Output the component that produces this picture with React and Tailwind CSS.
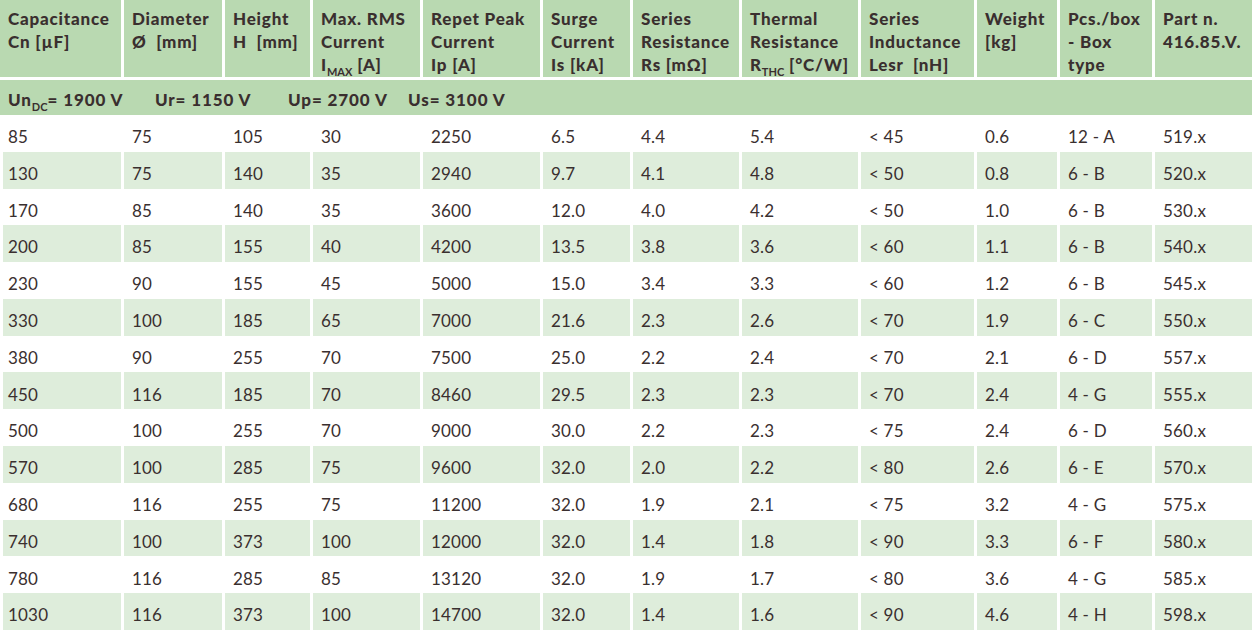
import React from "react";

const COLS =
  "grid grid-cols-[121px_98px_85px_107px_117px_87px_106px_116px_113px_80px_92px_97px] gap-x-[3px]";

const Sub = ({ children }) => (
  <span className="text-[11px] relative top-[5px] tracking-normal font-bold">{children}</span>
);

const headers = [
  <>Capacitance<br />Cn [µF]</>,
  <>Diameter<br />Ø&nbsp; [mm]</>,
  <>Height<br />H&nbsp; [mm]</>,
  <>Max. RMS<br />Current<br />I<Sub>MAX</Sub> [A]</>,
  <>Repet Peak<br />Current<br />Ip [A]</>,
  <>Surge<br />Current<br />Is [kA]</>,
  <>Series<br />Resistance<br />Rs [mΩ]</>,
  <>Thermal<br />Resistance<br />R<Sub>THC</Sub> [°C/W]</>,
  <>Series<br />Inductance<br />Lesr&nbsp; [nH]</>,
  <>Weight<br />[kg]</>,
  <>Pcs./box<br />- Box<br />type</>,
  <>Part n.<br />416.85.V.</>,
];

const rows = [
  ["85", "75", "105", "30", "2250", "6.5", "4.4", "5.4", "< 45", "0.6", "12 - A", "519.x"],
  ["130", "75", "140", "35", "2940", "9.7", "4.1", "4.8", "< 50", "0.8", "6 - B", "520.x"],
  ["170", "85", "140", "35", "3600", "12.0", "4.0", "4.2", "< 50", "1.0", "6 - B", "530.x"],
  ["200", "85", "155", "40", "4200", "13.5", "3.8", "3.6", "< 60", "1.1", "6 - B", "540.x"],
  ["230", "90", "155", "45", "5000", "15.0", "3.4", "3.3", "< 60", "1.2", "6 - B", "545.x"],
  ["330", "100", "185", "65", "7000", "21.6", "2.3", "2.6", "< 70", "1.9", "6 - C", "550.x"],
  ["380", "90", "255", "70", "7500", "25.0", "2.2", "2.4", "< 70", "2.1", "6 - D", "557.x"],
  ["450", "116", "185", "70", "8460", "29.5", "2.3", "2.3", "< 70", "2.4", "4 - G", "555.x"],
  ["500", "100", "255", "70", "9000", "30.0", "2.2", "2.3", "< 75", "2.4", "6 - D", "560.x"],
  ["570", "100", "285", "75", "9600", "32.0", "2.0", "2.2", "< 80", "2.6", "6 - E", "570.x"],
  ["680", "116", "255", "75", "11200", "32.0", "1.9", "2.1", "< 75", "3.2", "4 - G", "575.x"],
  ["740", "100", "373", "100", "12000", "32.0", "1.4", "1.8", "< 90", "3.3", "6 - F", "580.x"],
  ["780", "116", "285", "85", "13120", "32.0", "1.9", "1.7", "< 80", "3.6", "4 - G", "585.x"],
  ["1030", "116", "373", "100", "14700", "32.0", "1.4", "1.6", "< 90", "4.6", "4 - H", "598.x"],
];

export default function App() {
  return (
    <div
      className="w-[1252px] h-[630px] bg-white overflow-hidden flex flex-col text-[#3a2f2f]"
      style={{ fontFamily: "Lato, 'Open Sans', sans-serif" }}
    >
      <div className={`${COLS} h-[77px] shrink-0`}>
        {headers.map((h, i) => (
          <div
            key={i}
            className="bg-[#b9d9b1] pl-[8px] pt-[7px] text-[17px] font-black leading-[23px] tracking-[0.8px] whitespace-nowrap overflow-hidden"
          >
            {h}
          </div>
        ))}
      </div>
      <div className="mt-[3px] h-[35px] shrink-0 bg-[#b9d9b1] flex items-center pl-[8px] pt-[4px] text-[17px] font-black tracking-[0.9px] whitespace-nowrap">
        <span className="w-[147px]">
          Un<Sub>DC</Sub>= 1900 V
        </span>
        <span className="w-[133px]">Ur= 1150 V</span>
        <span className="w-[120px]">Up= 2700 V</span>
        <span>Us= 3100 V</span>
      </div>
      <div className="flex-1 flex flex-col">
        {rows.map((r, ri) => {
          const green = ri % 2 === 1;
          return (
            <div key={ri} className={`${COLS} flex-1`}>
              {r.map((c, ci) => (
                <div
                  key={ci}
                  className={`flex items-center pt-[7px] text-[17px] tracking-[0.2px] whitespace-nowrap ${
                    green ? "bg-[#deeddb]" : ""
                  } ${ci === 0 ? "ml-[3px] pl-[5px]" : "pl-[8px]"}`}
                >
                  {c}
                </div>
              ))}
            </div>
          );
        })}
      </div>
    </div>
  );
}
